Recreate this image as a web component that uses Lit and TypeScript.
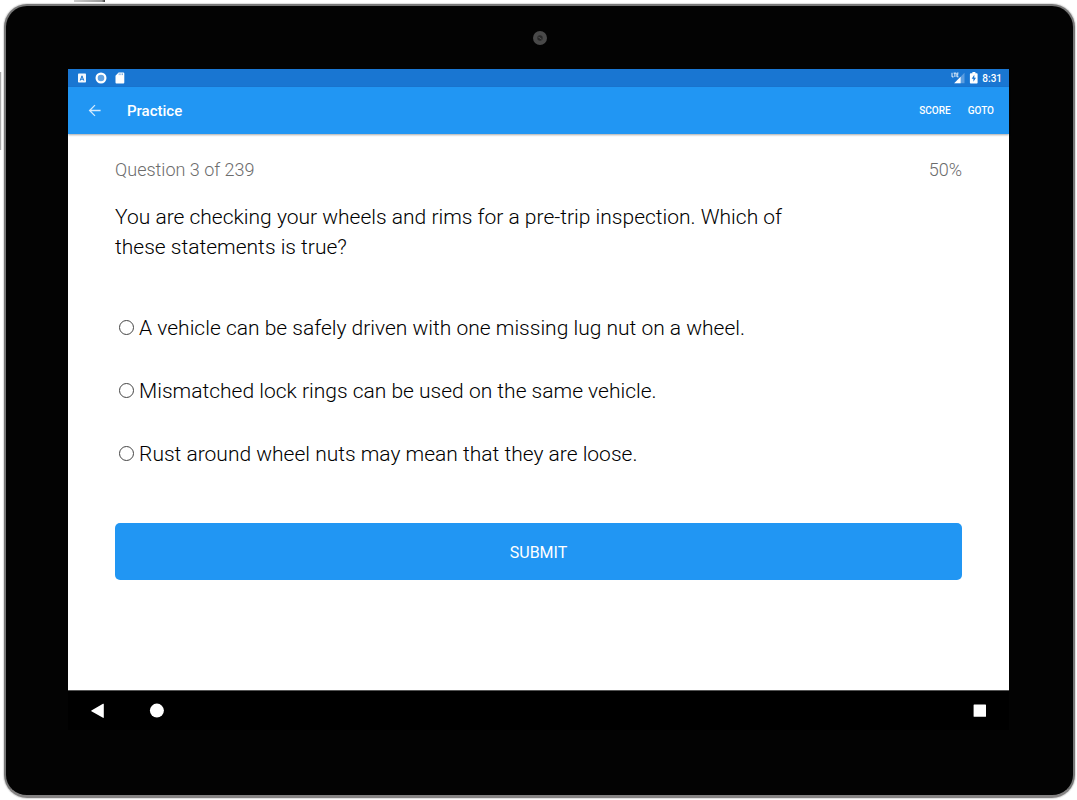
import { LitElement, html, css, svg } from "lit";
import { customElement, state } from "lit/decorators.js";

const ANSWERS = [
  "A vehicle can be safely driven with one missing lug nut on a wheel.",
  "Mismatched lock rings can be used on the same vehicle.",
  "Rust around wheel nuts may mean that they are loose.",
];

@customElement("status-bar")
class StatusBar extends LitElement {
  static styles = css`
    :host {
      display: flex;
      justify-content: space-between;
      align-items: center;
      height: 18px;
      padding: 0 7px 0 9px;
      background: #1976d2;
      color: #fff;
      font: 500 10px/18px Roboto, sans-serif;
    }
    .group { display: flex; align-items: center; }
    .left { gap: 8px; }
    .right { gap: 4px; }
    .time { padding-top: 1px; }
    svg { display: block; }
  `;

  render() {
    return html`
      <div class="group left">
        <svg width="10" height="12" viewBox="0 0 10 12">
          <rect x="1" y="1.6" width="8" height="9" rx="0.8" fill="#f4f8fd" />
          <path d="M3.2 8.6 5 3.8 6.8 8.6M3.8 7.2h2.4" fill="none" stroke="#1976d2" stroke-width="1" />
        </svg>
        <svg width="12" height="12" viewBox="0 0 12 12">
          <circle cx="6" cy="6" r="4.4" fill="#64a3e1" stroke="#fff" stroke-width="2.2" />
        </svg>
        <svg width="10" height="12" viewBox="0 0 10 12">
          <path d="M3.6 .6H8.4a.9.9 0 0 1 .9.9V10.5a.9.9 0 0 1-.9.9H1.4a.9.9 0 0 1-.9-.9V3.7Z" fill="#fff" />
          <path d="M4.2 1.4v1.7M5.9 1.4v1.7M7.5 1.4v1.7" stroke="#6da5df" stroke-width=".9" />
        </svg>
      </div>
      <div class="group right">
        <svg width="14" height="12" viewBox="0 0 14 12">
          <path d="M13.5 .8V11.2H3.2Z" fill="#5b9de0" />
          <path d="M9.6 4.8V11.2H3.2Z" fill="#fff" />
          <path d="M0 0H7.6V6H3L0 4.4Z" fill="#1976d2" />
          <path d="M1 .8V4.9H2.6M2.6 1.1H5.2M3.9 1.1V5M7.5 1.1H5.9V4.8H7.5M5.9 2.9H7.3" fill="none" stroke="#fff" stroke-width=".9" />
        </svg>
        <svg width="9" height="12" viewBox="0 0 9 12">
          <path d="M3.4 0H6.4V1.2H7.8a.8.8 0 0 1 .8.8V10.8a.8.8 0 0 1-.8.8H1.7a.8.8 0 0 1-.8-.8V2a.8.8 0 0 1 .8-.8H3.4Z" fill="#fff" />
          <path d="M5.3 2.8 2.7 6.8H4.4V9.8L7 5.8H5.3Z" fill="#1976d2" />
        </svg>
        <span class="time">8:31</span>
      </div>
    `;
  }
}

@customElement("app-bar")
class AppBar extends LitElement {
  static styles = css`
    :host {
      display: flex;
      align-items: center;
      height: 47px;
      padding: 0 15px 0 17px;
      background: #2196f3;
      color: #fff;
      box-shadow: 0 1px 2px rgba(0, 0, 0, 0.35);
      position: relative;
      font-family: Roboto, sans-serif;
    }
    button {
      border: 0;
      padding: 0;
      background: none;
      color: inherit;
      font: 500 10px/20px Roboto, sans-serif;
      cursor: pointer;
    }
    .back { display: grid; place-items: center; width: 20px; height: 20px; }
    h1 { margin: 0 auto 0 22px; font-size: 15px; line-height: 20px; font-weight: 500; }
    .actions { display: flex; gap: 17px; padding-top: 1px; }
  `;

  render() {
    return html`
      <button class="back" aria-label="Back">
        <svg width="14" height="14" viewBox="0 0 14 14" fill="none" stroke="#d3eafd" stroke-width="1.3">
          <path d="M12.6 6.5H1.6M7 1.1 1.6 6.5 7 11.9" />
        </svg>
      </button>
      <h1>Practice</h1>
      <div class="actions">
        <button>SCORE</button>
        <button>GOTO</button>
      </div>
    `;
  }
}

@customElement("question-page")
class QuestionPage extends LitElement {
  @state() private selected = -1;

  static styles = css`
    :host {
      display: block;
      flex: 1;
      padding: 24px 5% 0;
      background: #fff;
      color: #000;
      font: 300 21px/30px Roboto, sans-serif;
    }
    .meta {
      display: flex;
      justify-content: space-between;
      color: #6c6c6c;
      font-size: 18px;
      line-height: 24px;
    }
    .question { max-width: 80%; margin: 20px 0 0; }
    .answers {
      display: flex;
      flex-direction: column;
      gap: 33px;
      margin: 51px 0 0;
      padding: 0;
      border: 0;
    }
    .answer { display: flex; align-items: center; gap: 5px; padding-left: 4px; }
    .radio {
      appearance: none;
      flex: none;
      box-sizing: border-box;
      width: 15px;
      height: 15px;
      margin: 0 0 2px;
      border: 1px solid #444;
      border-radius: 50%;
      background: #fff;
    }
    .radio:checked { background: radial-gradient(#444 45%, #fff 50%); }
    .submit {
      display: block;
      width: 100%;
      margin-top: 54px;
      padding: 17px 16px 15px;
      border: 0;
      border-radius: 5px;
      background: #2196f3;
      color: #fff;
      font: 16px/25px Roboto, sans-serif;
      cursor: pointer;
    }
  `;

  render() {
    return html`
      <div class="meta"><span>Question 3 of 239</span><span>50%</span></div>
      <p class="question" id="question">
        You are checking your wheels and rims for a pre-trip inspection. Which of these statements is true?
      </p>
      <fieldset class="answers" aria-labelledby="question">
        ${ANSWERS.map(
          (text, i) => html`
            <label class="answer">
              <input
                class="radio"
                type="radio"
                name="answer"
                .checked=${this.selected === i}
                @change=${() => (this.selected = i)}
              />
              <span>${text}</span>
            </label>
          `
        )}
      </fieldset>
      <button class="submit">SUBMIT</button>
    `;
  }
}

@customElement("nav-bar")
class NavBar extends LitElement {
  static styles = css`
    :host {
      display: flex;
      align-items: center;
      gap: 39px;
      height: 39px;
      padding: 0 20px;
      border-top: 1px solid #555;
      background: #000;
    }
    button { display: grid; place-items: center; width: 20px; height: 20px; padding: 0; border: 0; background: none; cursor: pointer; }
    .recent { margin-left: auto; }
  `;

  private key(name: string, cls: string, shape: unknown) {
    return html`
      <button class=${cls} aria-label=${name}>
        <svg width="16" height="16" viewBox="0 0 16 16" fill="#fff">${shape}</svg>
      </button>
    `;
  }

  render() {
    return html`
      ${this.key("Back", "back", svg`<path d="M13.8 1.2V14.4a.5.5 0 0 1-.8.4L1.4 8.2a.5.5 0 0 1 0-.8L13 .8a.5.5 0 0 1 .8.4Z" />`)}
      ${this.key("Home", "home", svg`<circle cx="7.9" cy="7.6" r="7" />`)}
      ${this.key("Recent apps", "recent", svg`<rect x="2.6" y="1.4" width="12.4" height="12.4" rx=".6" />`)}
    `;
  }
}

@customElement("app-root")
class AppRoot extends LitElement {
  static styles = css`
    :host {
      display: flex;
      box-sizing: border-box;
      position: relative;
      min-height: 100vh;
      padding: 4px 2px 2px 4px;
      background: #fff;
    }
    .tablet {
      flex: 1;
      display: flex;
      flex-direction: column;
      box-sizing: border-box;
      border: 2px solid #777;
      border-bottom: 3px solid #858383;
      border-radius: 23px;
      background: #030303;
      box-shadow: 0 0 1px 1px #ddd;
    }
    .top { display: grid; place-items: center; height: 63px; }
    .camera { display: block; }
    .screen {
      flex: 1;
      display: flex;
      flex-direction: column;
      margin: 0 64px 65px 62px;
    }
    .power, .volume { position: absolute; }
    .power {
      left: 74px;
      top: 0;
      width: 31px;
      height: 2px;
      background: linear-gradient(90deg, #ccc, #999 90%, #333);
    }
    .volume { left: 0; top: 72px; width: 1px; height: 78px; background: #aaa; border-right: 1px solid #eee; }
  `;

  render() {
    return html`
      <span class="power"></span>
      <span class="volume"></span>
      <div class="tablet">
        <div class="top">
          <svg class="camera" width="14" height="14" viewBox="0 0 14 14">
            <circle cx="7" cy="7" r="7" fill="#494949" />
            <circle cx="7" cy="7" r="2.7" fill="#282828" />
            <path d="M5.4 6.2 7 7 8.6 8.2" stroke="#555" />
          </svg>
        </div>
        <div class="screen">
          <status-bar></status-bar>
          <app-bar></app-bar>
          <question-page></question-page>
          <nav-bar></nav-bar>
        </div>
      </div>
    `;
  }
}
